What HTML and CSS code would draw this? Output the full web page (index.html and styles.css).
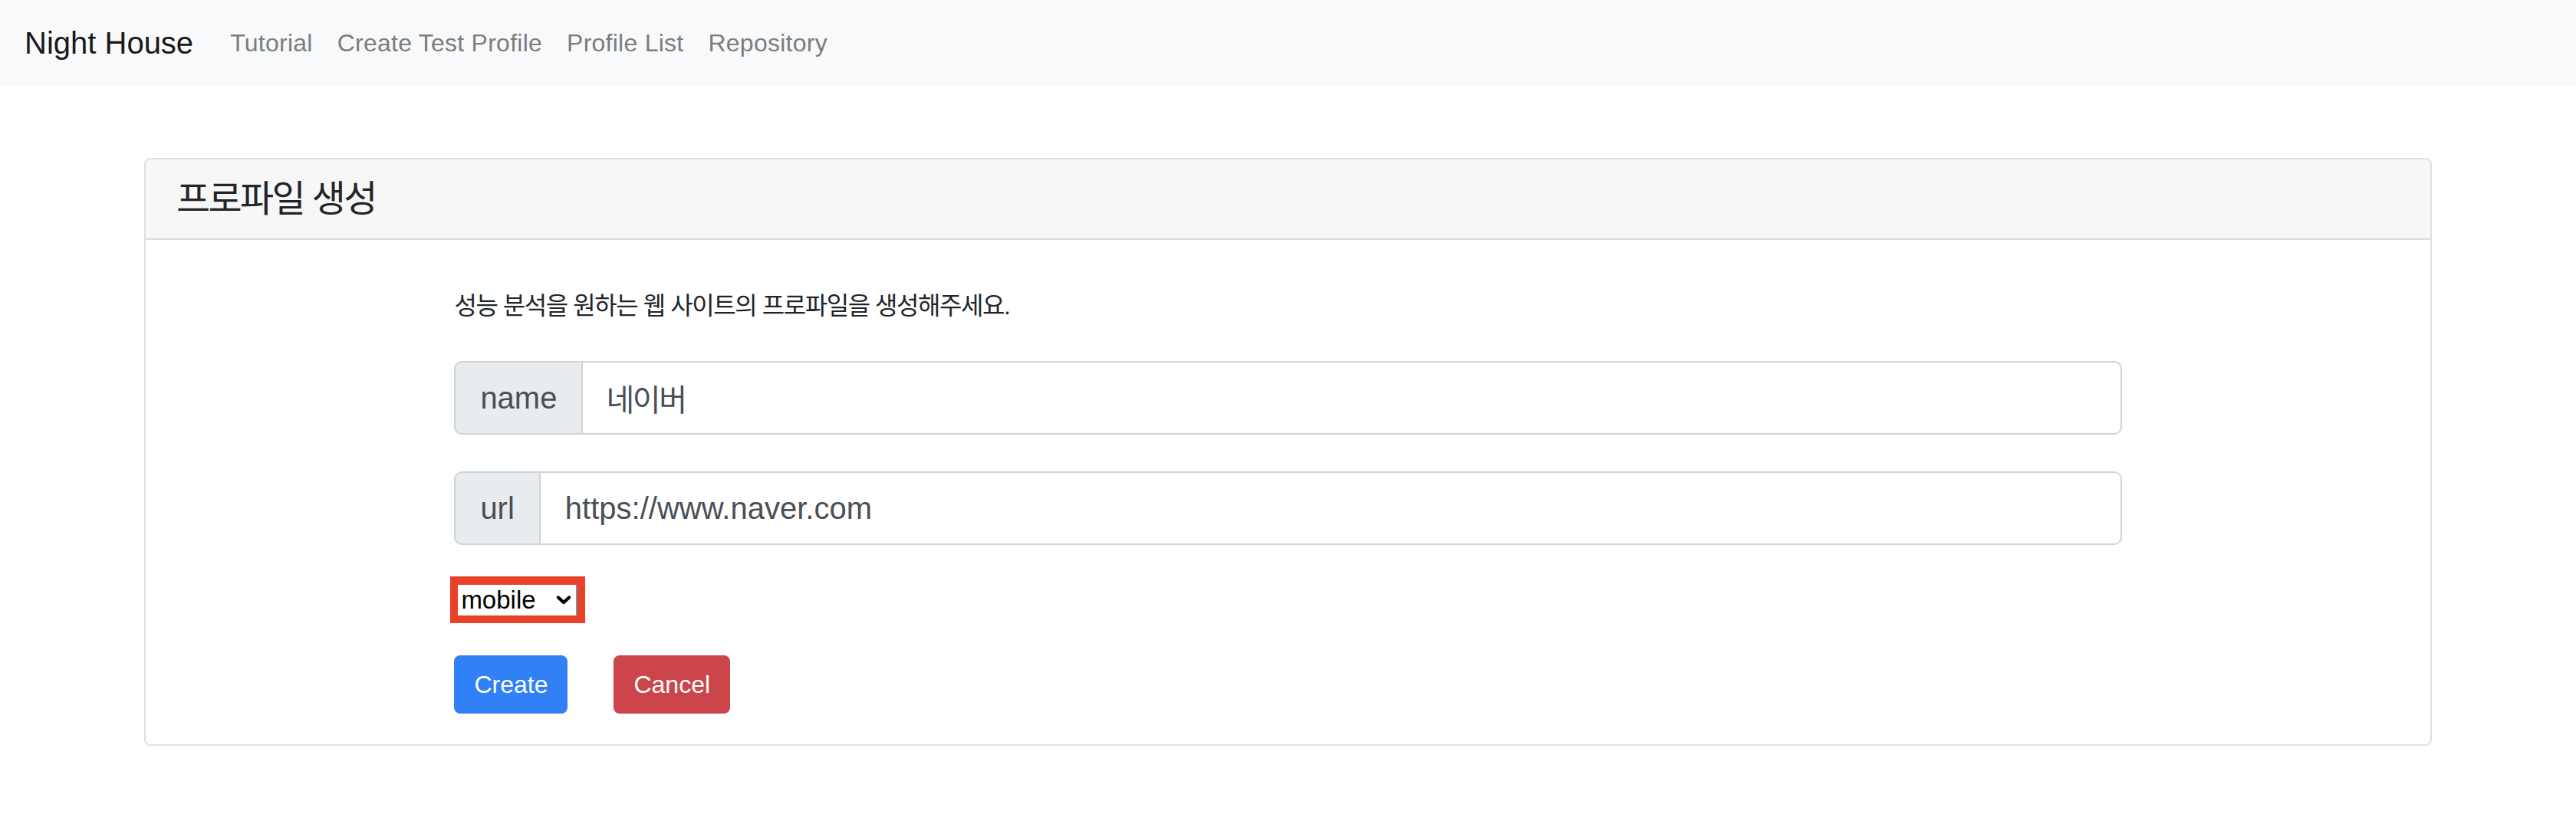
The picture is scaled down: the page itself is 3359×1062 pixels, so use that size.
FILE: index.html
```html
<!DOCTYPE html>
<html lang="ko">
<head>
<meta charset="utf-8">
<title>Night House</title>
<link rel="stylesheet" href="styles.css">
</head>
<body>
<nav class="navbar">
  <a class="brand" href="#">Night House</a>
  <ul class="nav">
    <li><a class="nav-link" href="#">Tutorial</a></li>
    <li><a class="nav-link" href="#">Create Test Profile</a></li>
    <li><a class="nav-link" href="#">Profile List</a></li>
    <li><a class="nav-link" href="#">Repository</a></li>
  </ul>
</nav>
<main class="page">
  <section class="card">
    <header class="card-header">
      <h4 class="card-title">프로파일 생성</h4>
    </header>
    <div class="card-body">
      <form class="form">
        <p class="intro">성능 분석을 원하는 웹 사이트의 프로파일을 생성해주세요.</p>
        <div class="input-group">
          <span class="addon">name</span>
          <input class="field field-ko" type="text" value="네이버">
        </div>
        <div class="input-group">
          <span class="addon">url</span>
          <input class="field" type="text" value="https://www.naver.com">
        </div>
        <div class="select-row">
          <div class="select-box">
            <select class="device">
              <option>mobile</option>
              <option>desktop</option>
            </select>
            <svg class="chevron" width="20" height="12" viewBox="0 0 20 12" aria-hidden="true">
              <path d="M3 2.5 L10 9 L17 2.5" fill="none" stroke="#000" stroke-width="4.4" stroke-linecap="round" stroke-linejoin="round"/>
            </svg>
          </div>
        </div>
        <div class="actions">
          <button class="btn btn-primary" type="button">Create</button>
          <button class="btn btn-danger" type="button">Cancel</button>
        </div>
      </form>
    </div>
  </section>
</main>
</body>
</html>
```
FILE: styles.css
```css
* { box-sizing: border-box; }

html, body {
  margin: 0;
  padding: 0;
  background: #ffffff;
}

body {
  font-family: "Liberation Sans", "Noto Sans CJK KR", sans-serif;
  font-size: 32px;
  line-height: 1.5;
  color: #212529;
}

/* navbar */
.navbar {
  display: flex;
  align-items: center;
  height: 112px;
  padding: 16px 32px;
  background: #f8f9fa;
}

.brand {
  font-size: 40px;
  line-height: 60px;
  color: #1a1a1a;
  text-decoration: none;
  margin-right: 32px;
}

.nav {
  display: flex;
  list-style: none;
  margin: 0;
  padding: 0;
}

.nav-link {
  display: block;
  padding: 16px 16px;
  font-size: 32px;
  line-height: 48px;
  letter-spacing: 0.25px;
  color: #7c7d7e;
  text-decoration: none;
}

/* card */
.page {
  padding: 94px 188px 0;
}

.card {
  border: 2px solid #dfdfdf;
  border-radius: 8px;
  background: #fff;
}

.card-header {
  background: #f7f7f7;
  border-bottom: 2px solid #dcdcdc;
  padding: 24px 40px;
  border-radius: 6px 6px 0 0;
}

.card-title {
  margin: 0;
  font-size: 48px;
  line-height: 55px;
  font-weight: 400;
  letter-spacing: -0.055em;
  color: #212529;
}

.card-body {
  padding: 40px;
}

.form {
  width: 75%;
  margin: 0 auto;
}

.intro {
  margin: 22px 0 48px;
  font-size: 32px;
  line-height: 48px;
  letter-spacing: -0.045em;
  color: #212529;
}

/* input groups */
.input-group {
  display: flex;
  height: 96px;
  margin-bottom: 48px;
}

.addon {
  display: flex;
  align-items: center;
  padding: 16px 32px;
  font-size: 40px;
  line-height: 60px;
  color: #495057;
  background: #e9ecef;
  border: 2px solid #ced4da;
  border-radius: 10px 0 0 10px;
}

.field {
  flex: 1;
  min-width: 0;
  height: 96px;
  padding: 16px 32px;
  font-family: inherit;
  font-size: 40px;
  line-height: 60px;
  color: #495057;
  background: #fff;
  border: 2px solid #ced4da;
  border-left: 0;
  border-radius: 0 10px 10px 0;
  outline: none;
}

.field-ko {
  letter-spacing: -0.06em;
  padding-left: 30px;
}

/* select */
.select-row {
  margin: -7px 0 42px -5px;
}

.select-box {
  position: relative;
  display: inline-block;
  border: 10px solid #ea4229;
  border-top-width: 11px;
  vertical-align: top;
}

.device {
  display: block;
  -webkit-appearance: none;
  appearance: none;
  width: 156px;
  height: 40px;
  margin: 0;
  padding: 0 0 0 4px;
  font-family: "Liberation Sans", sans-serif;
  font-size: 33px;
  line-height: 40px;
  color: #000;
  background: #fff;
  border: 0;
  border-right: 2px solid #8c8c8c;
  border-radius: 0;
  outline: none;
}

.chevron {
  position: absolute;
  right: 8px;
  top: 14px;
  pointer-events: none;
}

/* buttons */
.actions {
  display: flex;
  gap: 60px;
}

.btn {
  height: 76px;
  padding: 12px 24px;
  font-family: inherit;
  font-size: 32px;
  line-height: 48px;
  color: #fff;
  border: 2px solid transparent;
  border-radius: 8px;
  cursor: pointer;
}

.btn-primary {
  background: #3180f6;
  border-color: #3180f6;
}

.btn-danger {
  background: #cb454b;
  border-color: #cb454b;
}
```
